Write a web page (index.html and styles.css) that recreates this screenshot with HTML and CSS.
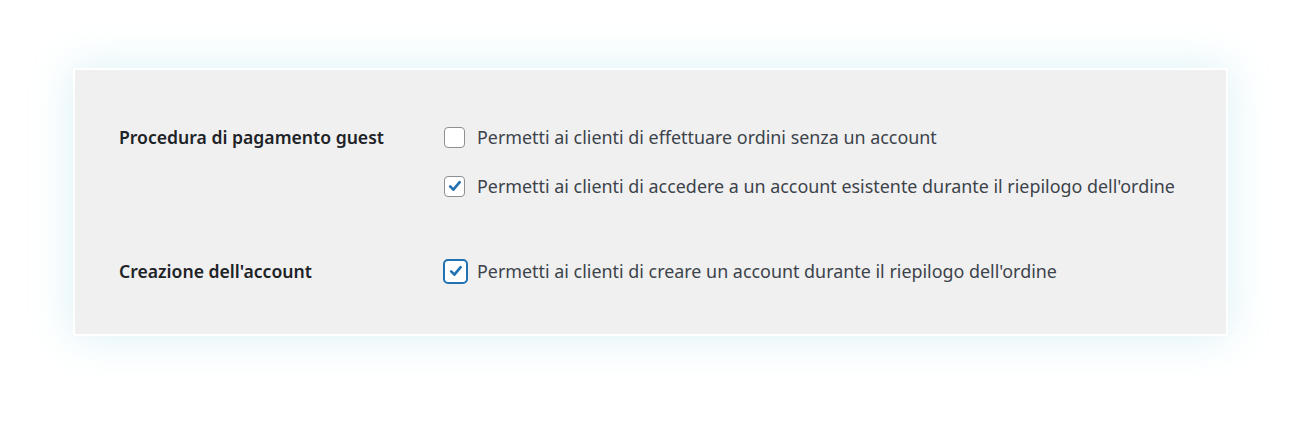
FILE: index.html
```html
<!DOCTYPE html>
<html lang="it">
<head>
<meta charset="utf-8">
<link rel="stylesheet" href="styles.css">
</head>
<body>
<div class="stage">
  <div class="panel">
    <div class="section">
      <div class="label">Procedura di pagamento guest</div>
      <div class="options">
        <label class="opt">
          <span class="box"></span>
          <span class="text">Permetti ai clienti di effettuare ordini senza un account</span>
        </label>
        <label class="opt">
          <span class="box checked">
            <svg viewBox="0 0 20 20"><path d="M4.6 10.4l3.6 3.7 7-8.4" fill="none" stroke="#2271b1" stroke-width="2.9" stroke-linecap="round" stroke-linejoin="round"/></svg>
          </span>
          <span class="text">Permetti ai clienti di accedere a un account esistente durante il riepilogo dell'ordine</span>
        </label>
      </div>
    </div>
    <div class="section second">
      <div class="label">Creazione dell'account</div>
      <div class="options">
        <label class="opt">
          <span class="box checked focus">
            <svg viewBox="0 0 20 20"><path d="M4.6 10.4l3.6 3.7 7-8.4" fill="none" stroke="#2271b1" stroke-width="2.9" stroke-linecap="round" stroke-linejoin="round"/></svg>
          </span>
          <span class="text">Permetti ai clienti di creare un account durante il riepilogo dell'ordine</span>
        </label>
      </div>
    </div>
  </div>
</div>
</body>
</html>
```

FILE: styles.css
```css
html, body {
  margin: 0;
  padding: 0;
  background: #ffffff;
}
body {
  width: 1300px;
  height: 427px;
  overflow: hidden;
  font-family: "Noto Sans", "Open Sans", sans-serif;
}
.stage {
  padding: 68px 72px 0 73px;
}
.panel {
  box-sizing: content-box;
  width: 1107px;
  height: 264px;
  background: #f0f0f1;
  border: 2px solid #ffffff;
  box-shadow: 0 0 40px rgba(120, 205, 225, 0.28);
  padding: 0 0 0 44px;
}
.section {
  display: flex;
  padding-top: 53px;
}
.section.second {
  padding-top: 57px;
}
.label {
  width: 325px;
  flex: none;
  font-size: 17.6px;
  font-weight: 600;
  color: #1d2327;
  line-height: 28px;
}
.options {
  display: flex;
  flex-direction: column;
  gap: 21px;
}
.opt {
  display: flex;
  align-items: center;
  gap: 12px;
  height: 28px;
}
.box {
  width: 21px;
  height: 21px;
  box-sizing: border-box;
  border: 1.5px solid #8c8f94;
  border-radius: 4px;
  background: #ffffff;
  display: flex;
  align-items: center;
  justify-content: center;
}
.box svg {
  width: 18px;
  height: 18px;
  flex: none;
}
.box.focus {
  width: 25px;
  height: 25px;
  margin-left: -1px;
  margin-right: -3px;
  border: 2.5px solid #2271b1;
  border-radius: 5px;
}
.text {
  font-size: 17.9px;
  color: #3c434a;
  line-height: 28px;
  white-space: nowrap;
}
```
